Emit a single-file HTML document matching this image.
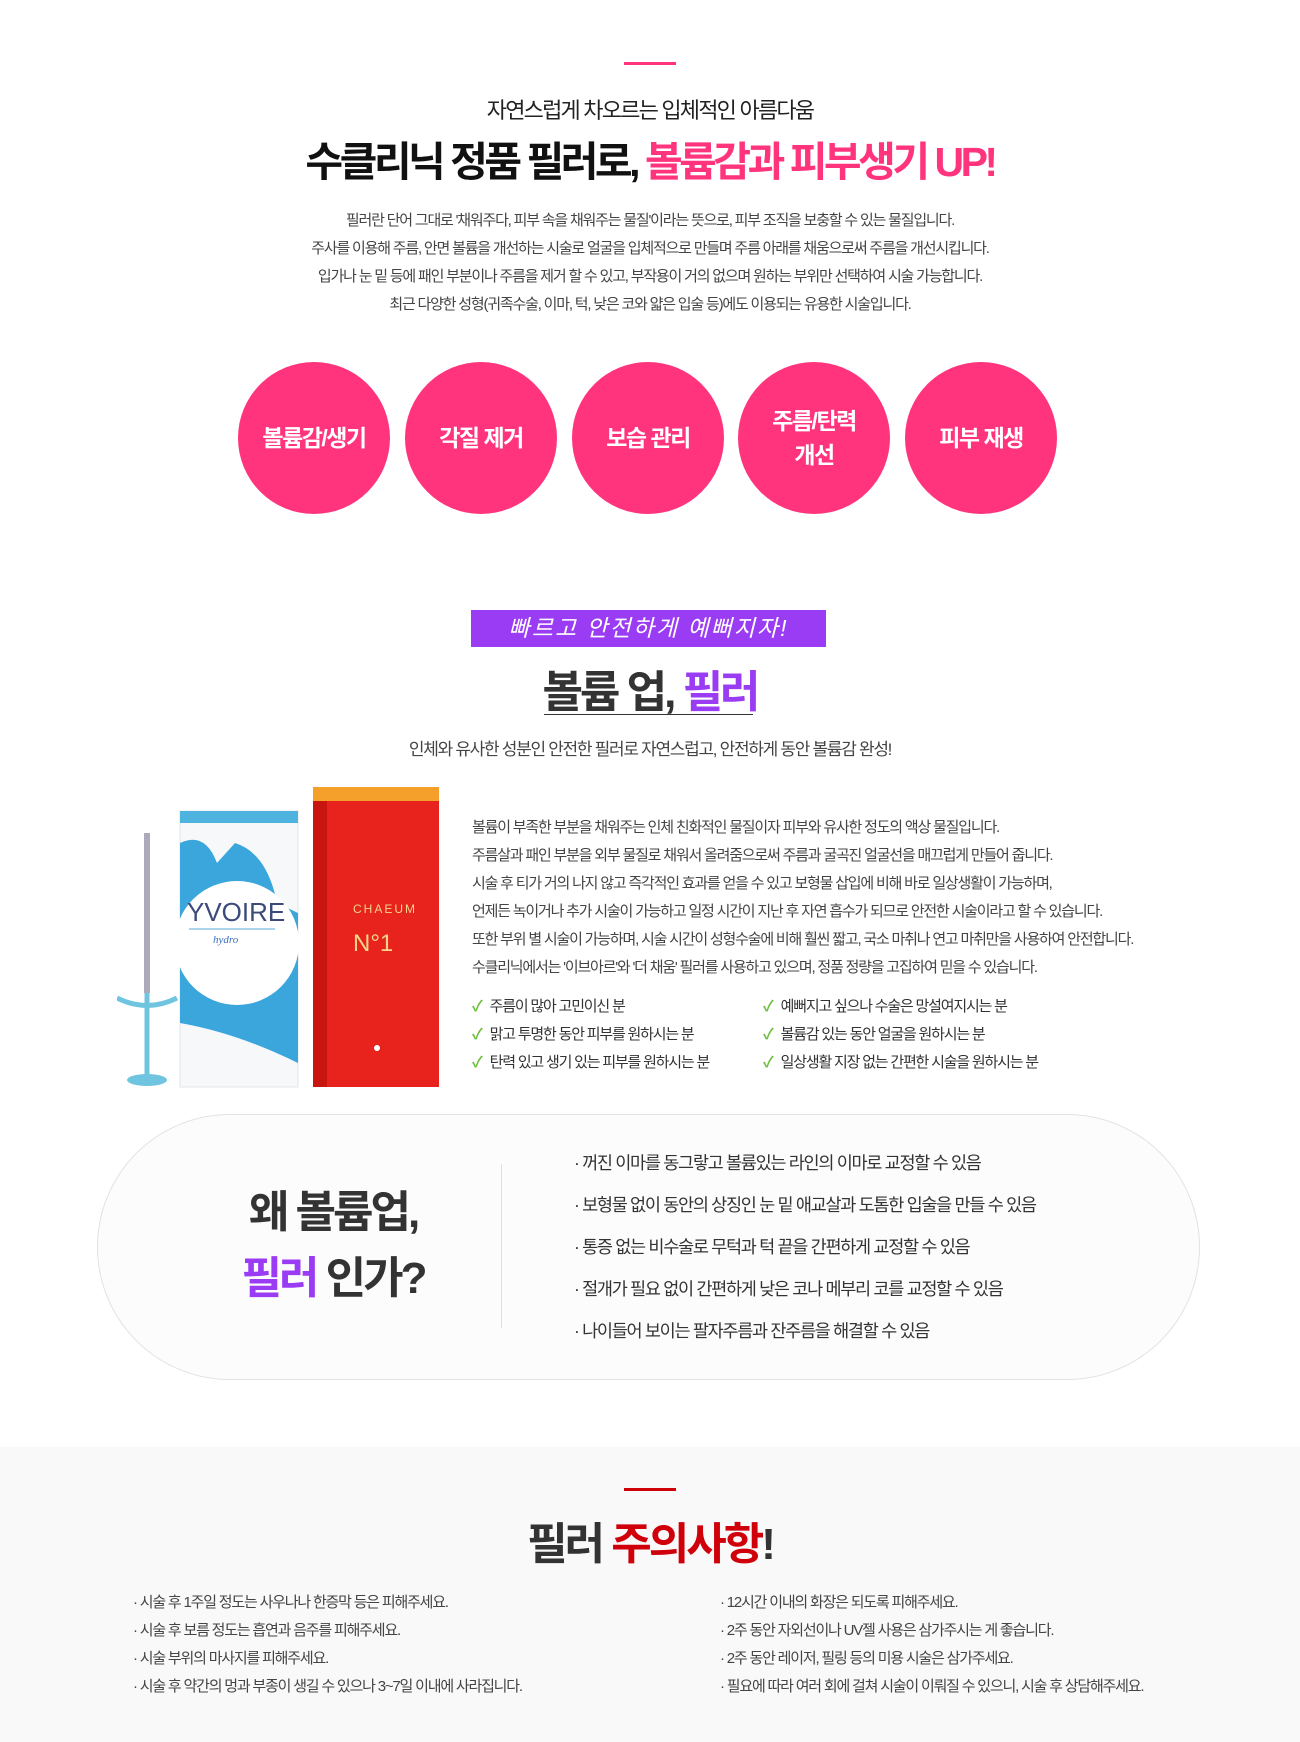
<!DOCTYPE html>
<html><head><meta charset="utf-8"><style>
*{margin:0;padding:0;box-sizing:border-box}
body{width:1300px;height:1742px;background:#fff;font-family:"Liberation Sans","Noto Sans CJK KR",sans-serif;color:#333;position:relative;overflow:hidden}
.a{position:absolute}
.c{left:0;width:1300px;text-align:center}
.bar{height:3px;width:52px;left:624px}
.p{font-size:15px;letter-spacing:-1.2px;color:#444;line-height:28px}
.circ{width:152px;height:152px;border-radius:50%;background:#ff347d;color:#fff;font-size:23px;font-weight:700;letter-spacing:-1.5px;display:flex;align-items:center;justify-content:center;text-align:center;line-height:34px;top:362px}
.chk{color:#6cbf3a;font-weight:700;margin-right:8px}
.li{font-size:15px;letter-spacing:-1.2px;color:#333;line-height:28px}
.bl{font-size:17.5px;letter-spacing:-1.3px;color:#333}
</style></head><body>
<div class="a bar" style="top:62px;background:#ff347d"></div>
<div class="a c" style="top:93px;font-size:22px;letter-spacing:-1.8px;color:#222">자연스럽게 차오르는 입체적인 아름다움</div>
<div class="a c" style="top:128px;font-size:41px;font-weight:700;letter-spacing:-3.5px;color:#111">수클리닉 정품 필러로, <span style="color:#ff347d">볼륨감과 피부생기 UP!</span></div>
<div class="a c p" style="top:207px">필러란 단어 그대로 '채워주다, 피부 속을 채워주는 물질'이라는 뜻으로, 피부 조직을 보충할 수 있는 물질입니다.<br>주사를 이용해 주름, 안면 볼륨을 개선하는 시술로 얼굴을 입체적으로 만들며 주름 아래를 채움으로써 주름을 개선시킵니다.<br>입가나 눈 밑 등에 패인 부분이나 주름을 제거 할 수 있고, 부작용이 거의 없으며 원하는 부위만 선택하여 시술 가능합니다.<br>최근 다양한 성형(귀족수술, 이마, 턱, 낮은 코와 얇은 입술 등)에도 이용되는 유용한 시술입니다.</div>
<div class="a circ" style="left:238px">볼륨감/생기</div>
<div class="a circ" style="left:405px">각질 제거</div>
<div class="a circ" style="left:572px">보습 관리</div>
<div class="a circ" style="left:738px">주름/탄력<br>개선</div>
<div class="a circ" style="left:905px">피부 재생</div>

<div class="a" style="left:471px;top:610px;width:355px;height:37px;background:#9b3cf5;color:#fff;font-size:23px;text-align:center;line-height:37px;letter-spacing:2px;font-style:italic">빠르고 안전하게 예뻐지자!</div>
<div class="a c" style="top:656px;font-size:44px;font-weight:700;letter-spacing:-3px;color:#333">볼륨 업, <span style="color:#9b3cf5">필러</span></div>
<div class="a" style="left:544px;top:714px;width:209px;height:1px;background:#333"></div>
<div class="a c" style="top:735px;font-size:17px;letter-spacing:-1.3px;color:#444">인체와 유사한 성분인 안전한 필러로 자연스럽고, 안전하게 동안 볼륨감 완성!</div>

<!-- products -->
<svg class="a" style="left:117px;top:783px" width="325" height="310" viewBox="0 0 325 310">
 <rect x="63" y="28" width="118" height="276" fill="#f6f8fa" stroke="#e2e6ea"/>
 <rect x="63" y="28" width="118" height="12" fill="#4fb3df"/>
 <path d="M63 60 Q88 48 100 80 L118 60 Q150 70 160 120 L181 130 L181 280 Q120 250 63 240Z" fill="#3aa6dc"/>
 <circle cx="120" cy="160" r="62" fill="#fff"/>
 <text x="70" y="138" font-family="Liberation Sans" font-size="26" fill="#3b4a7a">YVOIRE</text>
 <line x1="72" y1="146" x2="158" y2="146" stroke="#5aa8d8"/>
 <text x="96" y="160" font-family="Liberation Serif" font-style="italic" font-size="11" fill="#3a6fbf">hydro</text>
 <rect x="196" y="4" width="126" height="300" fill="#e8231d"/>
 <rect x="196" y="4" width="126" height="14" fill="#f4a02a"/>
 <rect x="196" y="18" width="14" height="286" fill="#c81510"/>
 <text x="236" y="130" font-family="Liberation Sans" font-size="12" fill="#f5d58a" letter-spacing="2">CHAEUM</text>
 <text x="236" y="168" font-family="Liberation Sans" font-size="24" fill="#f5d58a">N°1</text>
 <circle cx="260" cy="265" r="3" fill="#fff"/>
 <line x1="30" y1="50" x2="30" y2="210" stroke="#aab" stroke-width="6"/>
 <line x1="30" y1="210" x2="30" y2="295" stroke="#6fc4e0" stroke-width="5"/>
 <path d="M0 215 Q30 230 60 215" stroke="#6fc4e0" stroke-width="5" fill="none"/>
 <ellipse cx="30" cy="297" rx="20" ry="6" fill="#6fc4e0"/>
</svg>
<div class="a p" style="left:472px;top:814px">볼륨이 부족한 부분을 채워주는 인체 친화적인 물질이자 피부와 유사한 정도의 액상 물질입니다.<br>주름살과 패인 부분을 외부 물질로 채워서 올려줌으로써 주름과 굴곡진 얼굴선을 매끄럽게 만들어 줍니다.<br>시술 후 티가 거의 나지 않고 즉각적인 효과를 얻을 수 있고 보형물 삽입에 비해 바로 일상생활이 가능하며,<br>언제든 녹이거나 추가 시술이 가능하고 일정 시간이 지난 후 자연 흡수가 되므로 안전한 시술이라고 할 수 있습니다.<br>또한 부위 별 시술이 가능하며, 시술 시간이 성형수술에 비해 훨씬 짧고, 국소 마취나 연고 마취만을 사용하여 안전합니다.<br>수클리닉에서는 '이브아르'와 '더 채움' 필러를 사용하고 있으며, 정품 정량을 고집하여 믿을 수 있습니다.</div>
<div class="a li" style="left:472px;top:993px"><span class="chk">✓</span>주름이 많아 고민이신 분<br><span class="chk">✓</span>맑고 투명한 동안 피부를 원하시는 분<br><span class="chk">✓</span>탄력 있고 생기 있는 피부를 원하시는 분</div>
<div class="a li" style="left:763px;top:993px"><span class="chk">✓</span>예뻐지고 싶으나 수술은 망설여지시는 분<br><span class="chk">✓</span>볼륨감 있는 동안 얼굴을 원하시는 분<br><span class="chk">✓</span>일상생활 지장 없는 간편한 시술을 원하시는 분</div>

<div class="a" style="left:97px;top:1114px;width:1103px;height:266px;border-radius:133px;border:1px solid #e2e2e2;background:#fcfcfc"></div>
<div class="a" style="left:183px;top:1180px;width:300px;text-align:center;font-size:44px;font-weight:700;letter-spacing:-3px;line-height:66px;color:#333">왜 볼륨업,<br><span style="color:#9b3cf5">필러</span> 인가?</div>
<div class="a" style="left:501px;top:1164px;width:1px;height:164px;background:#e0e0e0"></div>
<div class="a bl" style="left:574px;top:1150px">· 꺼진 이마를 동그랗고 볼륨있는 라인의 이마로 교정할 수 있음</div>
<div class="a bl" style="left:574px;top:1192px">· 보형물 없이 동안의 상징인 눈 밑 애교살과 도톰한 입술을 만들 수 있음</div>
<div class="a bl" style="left:574px;top:1234px">· 통증 없는 비수술로 무턱과 턱 끝을 간편하게 교정할 수 있음</div>
<div class="a bl" style="left:574px;top:1276px">· 절개가 필요 없이 간편하게 낮은 코나 메부리 코를 교정할 수 있음</div>
<div class="a bl" style="left:574px;top:1318px">· 나이들어 보이는 팔자주름과 잔주름을 해결할 수 있음</div>

<div class="a" style="left:0;top:1447px;width:1300px;height:295px;background:#f9f9f9"></div>
<div class="a bar" style="top:1488px;background:#d0000b"></div>
<div class="a c" style="top:1508px;font-size:44px;font-weight:700;letter-spacing:-3px;color:#333">필러 <span style="color:#d0000b">주의사항</span>!</div>
<div class="a li" style="left:133px;top:1589px;color:#444">· 시술 후 1주일 정도는 사우나나 한증막 등은 피해주세요.<br>· 시술 후 보름 정도는 흡연과 음주를 피해주세요.<br>· 시술 부위의 마사지를 피해주세요.<br>· 시술 후 약간의 멍과 부종이 생길 수 있으나 3~7일 이내에 사라집니다.</div>
<div class="a li" style="left:720px;top:1589px;color:#444">· 12시간 이내의 화장은 되도록 피해주세요.<br>· 2주 동안 자외선이나 UV젤 사용은 삼가주시는 게 좋습니다.<br>· 2주 동안 레이저, 필링 등의 미용 시술은 삼가주세요.<br>· 필요에 따라 여러 회에 걸쳐 시술이 이뤄질 수 있으니, 시술 후 상담해주세요.</div>
</body></html>
